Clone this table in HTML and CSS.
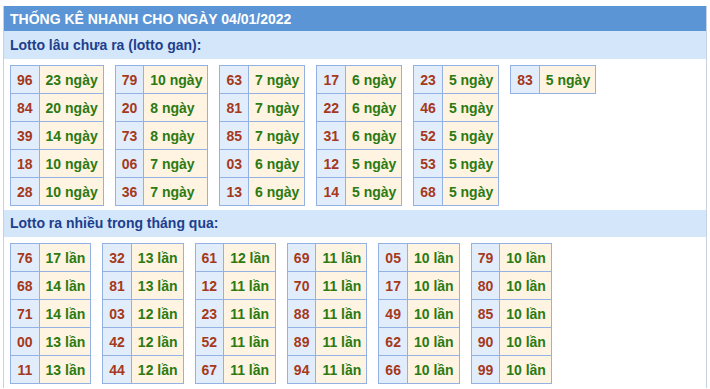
FILE: index.html
```html
<!DOCTYPE html>
<html lang="vi">
<head>
<meta charset="utf-8">
<link rel="stylesheet" href="styles.css">
</head>
<body>
<div class="box">
  <div class="title">THỐNG KÊ NHANH CHO NGÀY 04/01/2022</div>
  <div class="sub">Lotto lâu chưa ra (lotto gan):</div>
  <div class="grid">
    <table class="lt"><tr><td class="n">96</td><td class="v">23 ngày</td></tr><tr><td class="n">84</td><td class="v">20 ngày</td></tr><tr><td class="n">39</td><td class="v">14 ngày</td></tr><tr><td class="n">18</td><td class="v">10 ngày</td></tr><tr><td class="n">28</td><td class="v">10 ngày</td></tr></table>
    <table class="lt"><tr><td class="n">79</td><td class="v">10 ngày</td></tr><tr><td class="n">20</td><td class="v">8 ngày</td></tr><tr><td class="n">73</td><td class="v">8 ngày</td></tr><tr><td class="n">06</td><td class="v">7 ngày</td></tr><tr><td class="n">36</td><td class="v">7 ngày</td></tr></table>
    <table class="lt"><tr><td class="n">63</td><td class="v">7 ngày</td></tr><tr><td class="n">81</td><td class="v">7 ngày</td></tr><tr><td class="n">85</td><td class="v">7 ngày</td></tr><tr><td class="n">03</td><td class="v">6 ngày</td></tr><tr><td class="n">13</td><td class="v">6 ngày</td></tr></table>
    <table class="lt"><tr><td class="n">17</td><td class="v">6 ngày</td></tr><tr><td class="n">22</td><td class="v">6 ngày</td></tr><tr><td class="n">31</td><td class="v">6 ngày</td></tr><tr><td class="n">12</td><td class="v">5 ngày</td></tr><tr><td class="n">14</td><td class="v">5 ngày</td></tr></table>
    <table class="lt"><tr><td class="n">23</td><td class="v">5 ngày</td></tr><tr><td class="n">46</td><td class="v">5 ngày</td></tr><tr><td class="n">52</td><td class="v">5 ngày</td></tr><tr><td class="n">53</td><td class="v">5 ngày</td></tr><tr><td class="n">68</td><td class="v">5 ngày</td></tr></table>
    <table class="lt"><tr><td class="n">83</td><td class="v">5 ngày</td></tr></table>
  </div>
  <div class="sub sub-2">Lotto ra nhiều trong tháng qua:</div>
  <div class="grid">
    <table class="lt"><tr><td class="n">76</td><td class="v">17 lần</td></tr><tr><td class="n">68</td><td class="v">14 lần</td></tr><tr><td class="n">71</td><td class="v">14 lần</td></tr><tr><td class="n">00</td><td class="v">13 lần</td></tr><tr><td class="n">11</td><td class="v">13 lần</td></tr></table>
    <table class="lt"><tr><td class="n">32</td><td class="v">13 lần</td></tr><tr><td class="n">81</td><td class="v">13 lần</td></tr><tr><td class="n">03</td><td class="v">12 lần</td></tr><tr><td class="n">42</td><td class="v">12 lần</td></tr><tr><td class="n">44</td><td class="v">12 lần</td></tr></table>
    <table class="lt"><tr><td class="n">61</td><td class="v">12 lần</td></tr><tr><td class="n">12</td><td class="v">11 lần</td></tr><tr><td class="n">23</td><td class="v">11 lần</td></tr><tr><td class="n">52</td><td class="v">11 lần</td></tr><tr><td class="n">67</td><td class="v">11 lần</td></tr></table>
    <table class="lt"><tr><td class="n">69</td><td class="v">11 lần</td></tr><tr><td class="n">70</td><td class="v">11 lần</td></tr><tr><td class="n">88</td><td class="v">11 lần</td></tr><tr><td class="n">89</td><td class="v">11 lần</td></tr><tr><td class="n">94</td><td class="v">11 lần</td></tr></table>
    <table class="lt"><tr><td class="n">05</td><td class="v">10 lần</td></tr><tr><td class="n">17</td><td class="v">10 lần</td></tr><tr><td class="n">49</td><td class="v">10 lần</td></tr><tr><td class="n">62</td><td class="v">10 lần</td></tr><tr><td class="n">66</td><td class="v">10 lần</td></tr></table>
    <table class="lt"><tr><td class="n">79</td><td class="v">10 lần</td></tr><tr><td class="n">80</td><td class="v">10 lần</td></tr><tr><td class="n">85</td><td class="v">10 lần</td></tr><tr><td class="n">90</td><td class="v">10 lần</td></tr><tr><td class="n">99</td><td class="v">10 lần</td></tr></table>
  </div>
</div>
</body>
</html>
```
FILE: styles.css
```css
html, body {
  margin: 0;
  padding: 0;
  background: #ffffff;
}
body {
  font-family: "Liberation Sans", Arial, sans-serif;
}
.box {
  margin: 6px 3px 0 3px;
  border-left: 1px solid #c6d2e4;
  border-right: 1px solid #c6d2e4;
}
.title {
  height: 25px;
  line-height: 26px;
  background: #5b95d5;
  color: #ffffff;
  font-weight: bold;
  font-size: 14px;
  padding-left: 6px;
}
.sub {
  height: 28px;
  line-height: 28px;
  background: #d4e6f9;
  color: #1d3f8e;
  font-weight: bold;
  font-size: 14px;
  padding-left: 6px;
}
.sub-2 {
  height: 27px;
  line-height: 27px;
}
.grid {
  display: flex;
  align-items: flex-start;
  gap: 11px;
  padding: 6px 6px 4px 6px;
}
.lt {
  border-collapse: collapse;
  font-size: 14px;
  font-weight: bold;
}
.lt td {
  border: 1px solid #93b1e2;
  height: 28px;
  box-sizing: border-box;
}
.lt .n {
  padding: 0 6px;
  background: #e2edfb;
  color: #a5391c;
  text-align: center;
}
.lt .v {
  padding: 0 5px 0 6px;
  background: #fff3e1;
  color: #2b7a12;
}
```
